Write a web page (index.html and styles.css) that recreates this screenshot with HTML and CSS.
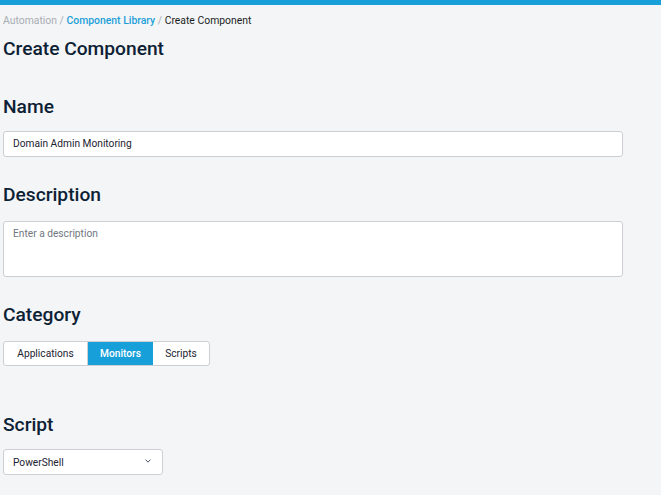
FILE: index.html
```html
<!DOCTYPE html>
<html>
<head>
<meta charset="utf-8">
<link rel="stylesheet" href="styles.css">
</head>
<body>
<div class="topbar"></div>
<main class="page">
  <nav class="breadcrumb">
    <span class="crumb-muted">Automation</span>
    <span class="sep">/</span>
    <span class="crumb-link">Component Library</span>
    <span class="sep">/</span>
    <span class="crumb-current">Create Component</span>
  </nav>
  <h1 class="title">Create Component</h1>

  <section class="field field-name">
    <h2 class="label">Name</h2>
    <div class="input">Domain Admin Monitoring</div>
  </section>

  <section class="field field-desc">
    <h2 class="label">Description</h2>
    <div class="textarea">Enter a description</div>
  </section>

  <section class="field field-cat">
    <h2 class="label">Category</h2>
    <div class="btn-group">
      <span class="seg seg-apps">Applications</span>
      <span class="seg seg-active">Monitors</span>
      <span class="seg seg-scripts">Scripts</span>
    </div>
  </section>

  <section class="field field-script">
    <h2 class="label">Script</h2>
    <div class="select">
      <span>PowerShell</span>
      <svg class="chev" width="6" height="4" viewBox="0 0 6 4"><path d="M0.6 0.6 L3 3.2 L5.4 0.6" fill="none" stroke="#4a5566" stroke-width="1"/></svg>
    </div>
  </section>
</main>
</body>
</html>
```
FILE: styles.css
```css
html, body {
  margin: 0;
  padding: 0;
  background: #f4f5f7;
  font-family: Roboto, "Liberation Sans", sans-serif;
  color: #0f2233;
}
.topbar {
  height: 5px;
  background: #179fda;
}
.page {
  padding: 0 0 0 3px;
}
.breadcrumb {
  margin-top: 9px;
  height: 14px;
  line-height: 14px;
  font-size: 10.4px;
  color: #1b1f24;
  white-space: nowrap;
}
.crumb-muted { color: #a8adb3; }
.sep { color: #a8adb3; }
.crumb-link { color: #1d9fd9; font-weight: 500; }
.crumb-current { color: #1b1f24; }
.title {
  margin: 10px 0 0 0;
  font-size: 19.2px;
  line-height: 22px;
  font-weight: 500;
  color: #0d2135;
}
.field-name { margin-top: 36px; }
.field-desc { margin-top: 27px; }
.field-cat { margin-top: 27px; }
.field-script { margin-top: 48px; }
.label {
  margin: 0 0 13px 0;
  font-size: 19.2px;
  line-height: 22px;
  font-weight: 500;
  color: #0d2135;
}
.input, .textarea, .select {
  box-sizing: border-box;
  background: #fff;
  border: 1px solid #cdcfd2;
  border-radius: 3px;
  font-size: 10.2px;
  color: #1b2230;
}
.input {
  width: 620px;
  height: 26px;
  line-height: 24px;
  padding-left: 9px;
}
.textarea {
  width: 620px;
  height: 56px;
  margin-top: 15px;
  padding: 6px 9px;
  line-height: 12px;
  color: #6f7780;
}
.field-desc .label { margin-bottom: 0; }
.btn-group {
  display: flex;
  width: 207px;
  height: 25px;
  margin-top: 15px;
  box-sizing: border-box;
  border: 1px solid #cdcfd2;
  border-radius: 3px;
  background: #fff;
  overflow: hidden;
}
.field-cat .label { margin-bottom: 0; }
.seg {
  display: flex;
  align-items: center;
  justify-content: center;
  font-size: 10.2px;
  color: #1b2230;
}
.seg-apps { width: 83px; border-right: 1px solid #cdcfd2; }
.seg-active { width: 65px; background: #179fda; color: #fff; font-weight: 500; }
.seg-scripts { flex: 1; }
.select {
  width: 160px;
  height: 26px;
  display: flex;
  align-items: center;
  justify-content: space-between;
  padding: 0 11px 0 9px;
}
.chev { margin-top: -2px; }
```
